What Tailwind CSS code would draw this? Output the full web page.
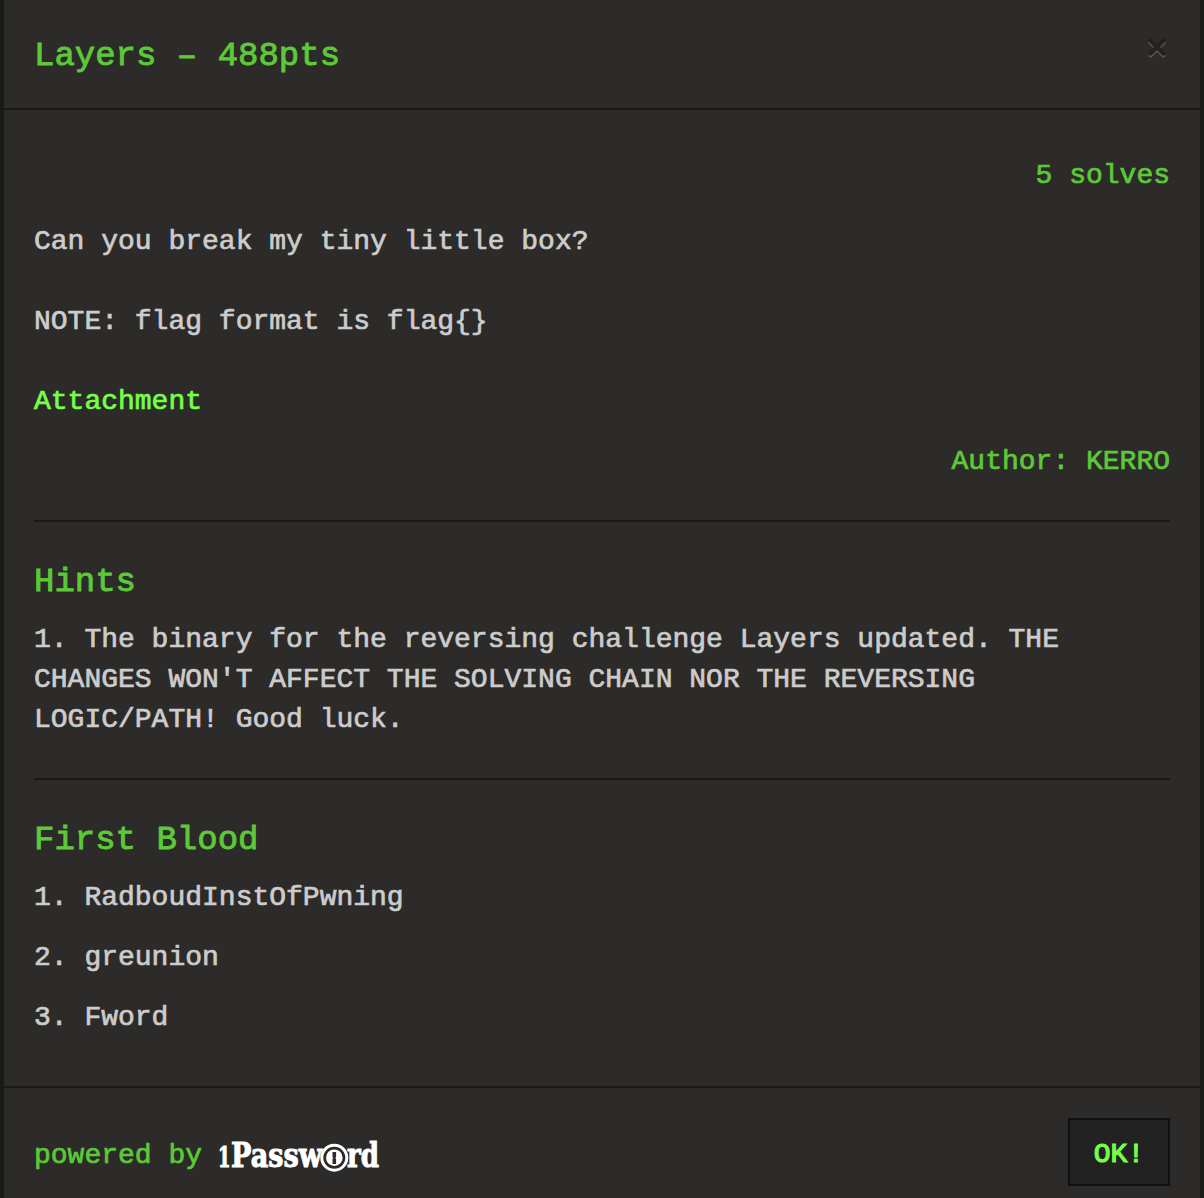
<!DOCTYPE html>
<html lang="en">
<head>
<meta charset="utf-8">
<title>Layers - 488pts</title>
<script src="https://cdn.jsdelivr.net/npm/@tailwindcss/browser@4"></script>
</head>
<body class="bg-[#1a1a19]">
<main class="mx-1 flex h-[1198px] flex-col overflow-hidden bg-[#2d2b29] font-['Liberation_Mono','Courier_New',monospace] text-[28px] leading-10 text-[#cccccc] [-webkit-text-stroke:0.7px]">
  <header class="flex h-[110px] shrink-0 items-start justify-between border-b-2 border-[#1a1918] px-[30px] pt-9">
    <h1 class="text-[34px] leading-10 text-[#5cc938] [-webkit-text-stroke:0.9px]">Layers – 488pts</h1>
    <button class="mt-0.5 mr-1" aria-label="Close">
      <svg class="block" width="18" height="20" viewBox="0 0 18 20" fill="none" stroke-linecap="round" stroke-width="4"><path d="M2.5 4.5 15.5 17.5M15.5 4.5 2.5 17.5" stroke="#5a5958"/><path d="M2.5 2.5 15.5 15.5M15.5 2.5 2.5 15.5" stroke="#232221" stroke-width="4.4"/></svg>
    </button>
  </header>
  <section class="h-[976px] shrink-0 px-[30px] pt-[46px]">
    <p class="text-right text-[#5cc938]">5 solves</p>
    <p class="mt-[26px]">Can you break my tiny little box?</p>
    <p class="mt-10">NOTE: flag format is flag{}</p>
    <p class="mt-10"><a class="text-[#75ff47]">Attachment</a></p>
    <p class="mt-5 text-right text-[#5cc938]">Author: KERRO</p>
    <hr class="mt-[38px] border-t-2 border-[#1a1918]">
    <h2 class="mt-10 text-[34px] leading-10 text-[#5cc938] [-webkit-text-stroke:0.9px]">Hints</h2>
    <p class="mt-[18px]">1. The binary for the reversing challenge Layers updated. THE CHANGES WON'T AFFECT THE SOLVING CHAIN NOR THE REVERSING LOGIC/PATH! Good luck.</p>
    <hr class="mt-[38px] border-t-2 border-[#1a1918]">
    <h2 class="mt-10 text-[34px] leading-10 text-[#5cc938] [-webkit-text-stroke:0.9px]">First Blood</h2>
    <ol class="mt-[18px] flex flex-col gap-5">
      <li>1. RadboudInstOfPwning</li>
      <li>2. greunion</li>
      <li>3. Fword</li>
    </ol>
  </section>
  <footer class="flex h-28 shrink-0 items-start justify-between border-t-2 border-[#1a1918] px-[30px] pt-[30px]">
    <div class="flex pt-[18px] text-[#5cc938]">
      <span class="w-[184px]">powered by</span>
      <svg class="block overflow-visible [-webkit-text-stroke:0px]" width="164" height="40" viewBox="0 0 164 40" fill="#fff" font-family="'DejaVu Serif',serif" font-weight="700" font-size="33" role="img" aria-label="1Password">
        <g stroke="#fff" stroke-width="1">
          <text x="0" y="31" font-size="28" textLength="12.5" lengthAdjust="spacingAndGlyphs">1</text>
          <text x="13" y="31" textLength="91" lengthAdjust="spacingAndGlyphs">Passw</text>
          <text x="129" y="31" textLength="32" lengthAdjust="spacingAndGlyphs">rd</text>
        </g>
        <circle cx="116.3" cy="21.7" r="12.5" fill="#2d2b29" stroke="#fff" stroke-width="3"/>
        <circle cx="116.3" cy="21.7" r="8.3"/>
        <path d="M114.5 16h3.6v5l-.8 1 .8 1v5h-3.6v-5l.8-1-.8-1z" fill="#2d2b29"/>
      </svg>
    </div>
    <button class="h-[68px] w-[102px] border-2 border-[#111111] bg-[#222222] pt-1.5 text-[#75ff47] [-webkit-text-stroke:1.2px] leading-10">OK!</button>
  </footer>
</main>
</body>
</html>
